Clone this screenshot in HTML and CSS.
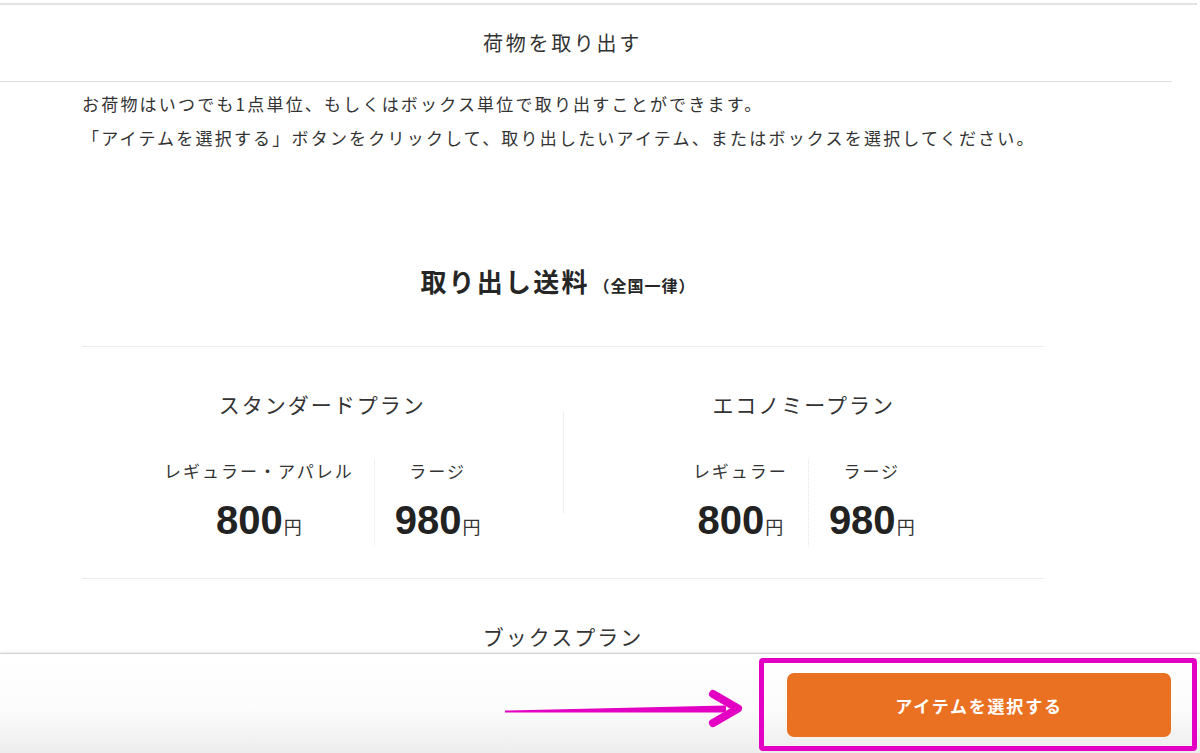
FILE: index.html
```html
<!DOCTYPE html>
<html lang="ja">
<head>
<meta charset="utf-8">
<title>荷物を取り出す</title>
<link rel="stylesheet" href="styles.css">
</head>
<body>
<div class="page">
  <main class="main">
    <div class="top-rule"></div>
    <header class="modal-header">
      <h1 class="modal-title">荷物を取り出す</h1>
    </header>
    <div class="content">
      <p class="lead">お荷物はいつでも1点単位、もしくはボックス単位で取り出すことができます。<br>「アイテムを選択する」ボタンをクリックして、取り出したいアイテム、またはボックスを選択してください。</p>
      <h2 class="fee-title">取り出し送料<span class="fee-note">（全国一律）</span></h2>
      <div class="rule"></div>
      <div class="plans">
        <section class="plan">
          <h3 class="plan-name">スタンダードプラン</h3>
          <div class="subs">
            <div class="sub">
              <div class="sub-label">レギュラー・アパレル</div>
              <div class="price">800<span class="yen">円</span></div>
            </div>
            <div class="sub sub-divided">
              <div class="sub-label">ラージ</div>
              <div class="price">980<span class="yen">円</span></div>
            </div>
          </div>
        </section>
        <div class="plan-divider"></div>
        <section class="plan">
          <h3 class="plan-name">エコノミープラン</h3>
          <div class="subs">
            <div class="sub">
              <div class="sub-label">レギュラー</div>
              <div class="price">800<span class="yen">円</span></div>
            </div>
            <div class="sub sub-divided">
              <div class="sub-label">ラージ</div>
              <div class="price">980<span class="yen">円</span></div>
            </div>
          </div>
        </section>
      </div>
      <div class="rule rule-lower"></div>
      <h3 class="plan-name books">ブックスプラン</h3>
    </div>
  </main>
  <footer class="footer">
    <button class="select-btn" type="button">アイテムを選択する</button>
    <div class="highlight"></div>
    <svg class="arrow" width="250" height="50" viewBox="0 0 250 50">
      <polygon points="5,26.6 226,21.5 226,28.5 5,28.4" fill="#e300c2"/>
      <polyline points="213,10 238,24.5 213,39" fill="none" stroke="#e300c2" stroke-width="8" stroke-linecap="round" stroke-linejoin="round"/>
    </svg>
  </footer>
</div>
</body>
</html>
```

FILE: styles.css
```css
html, body {
  margin: 0;
  padding: 0;
  background: #fff;
}

body {
  font-family: "Noto Sans CJK JP", "Noto Sans", sans-serif;
  color: #333;
}

.page {
  width: 1200px;
  height: 753px;
  display: flex;
  flex-direction: column;
  overflow: hidden;
}

.main {
  height: 653px;
  overflow: hidden;
  flex: none;
}

.top-rule {
  width: 1197px;
  height: 2px;
  margin-top: 3px;
  background: #e2e2e2;
}

.modal-header {
  width: 1125px;
  height: 76px;
  border-bottom: 1px solid #dcdcdc;
  display: flex;
  align-items: center;
  justify-content: center;
  padding-right: 47px;
  box-sizing: content-box;
}

.modal-title {
  margin: 0;
  font-size: 20px;
  font-weight: 400;
  letter-spacing: 2.7px;
  color: #333;
  line-height: 30px;
}

.content {
  margin-left: 82px;
  width: 962px;
}

.lead {
  margin: 5px 0 0;
  font-size: 17px;
  line-height: 34px;
  letter-spacing: 2.2px;
  color: #333;
}

.fee-title {
  margin: 106px 0 0;
  text-align: center;
  font-size: 26px;
  font-weight: 700;
  letter-spacing: 2.2px;
  line-height: 40px;
  color: #262626;
  padding-right: 10px;
}

.fee-note {
  font-size: 16px;
  letter-spacing: 1px;
  margin-left: 4px;
}

.rule {
  height: 1px;
  background: #ececec;
  margin-top: 41px;
}

.plans {
  display: flex;
  margin-top: 41px;
}

.plan {
  flex: 1;
  display: flex;
  flex-direction: column;
  align-items: center;
}

.plan-divider {
  width: 1px;
  height: 103px;
  margin-top: 23px;
  background: #efefef;
  flex: none;
}

.plan-name {
  margin: 0;
  font-size: 21px;
  font-weight: 400;
  letter-spacing: 2px;
  line-height: 32px;
  color: #333;
  text-align: center;
}

.subs {
  display: flex;
  margin-top: 39px;
}

.sub {
  display: flex;
  flex-direction: column;
  align-items: center;
  padding: 0 20px;
}

.sub-divided {
  border-left: 1px dotted #e4e4e4;
}

.sub-label {
  font-size: 17px;
  letter-spacing: 2px;
  line-height: 24px;
  color: #333;
  white-space: nowrap;
}

.price {
  margin-top: 17px;
  font-family: "Liberation Sans", Arial, sans-serif;
  font-size: 40px;
  font-weight: 700;
  line-height: 40px;
  color: #222;
  white-space: nowrap;
}

.yen {
  font-family: "Noto Sans CJK JP", sans-serif;
  font-size: 18px;
  font-weight: 400;
  color: #333;
  margin-left: 1px;
}

.rule-lower {
  margin-top: 32px;
}

.books {
  margin-top: 41px;
}

.footer {
  position: relative;
  flex: none;
  height: 100px;
  box-sizing: border-box;
  border-top: 1px solid #cfcfcf;
  box-shadow: 0 -1px 3px rgba(0, 0, 0, 0.08);
  background: linear-gradient(#ffffff 0%, #fcfcfc 55%, #ededed 100%);
  display: flex;
  justify-content: flex-end;
  align-items: flex-start;
  padding: 19px 29px 0 0;
}

.select-btn {
  width: 384px;
  height: 64px;
  border: none;
  border-radius: 7px;
  background: #ea7022;
  color: #fff;
  font-family: "Noto Sans CJK JP", sans-serif;
  font-size: 17px;
  font-weight: 700;
  letter-spacing: 1.8px;
  cursor: pointer;
}

.highlight {
  position: absolute;
  left: 759px;
  top: 4px;
  width: 438px;
  height: 93px;
  box-sizing: border-box;
  border: 5px solid #e300c2;
  border-radius: 4px;
}

.arrow {
  position: absolute;
  left: 500px;
  top: 30px;
}
```
